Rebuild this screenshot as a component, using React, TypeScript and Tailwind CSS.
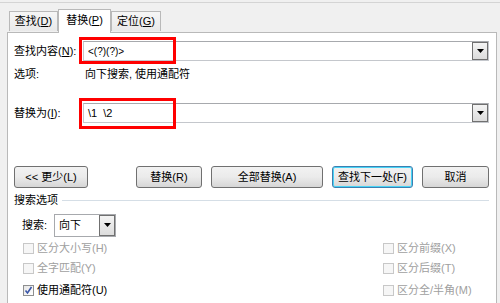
import React from "react";

const FONT = { fontFamily: '"Liberation Sans", "Noto Sans CJK SC", sans-serif' };

function DropBtn({ h }: { h: string }) {
  return (
    <div className={`w-[16px] ${h} border border-[#707070] bg-gradient-to-b from-[#f4f4f4] to-[#dcdcdc] flex items-center justify-center`}>
      <svg width="7" height="4" viewBox="0 0 7 4">
        <path d="M0 0h7L3.5 4z" fill="#000" />
      </svg>
    </div>
  );
}

function Btn({ w, label, primary }: { w: string; label: string; primary?: boolean }) {
  return (
    <div
      className={`${w} h-[22px] rounded-[3px] border ${primary ? "border-[#3c7fb1] shadow-[inset_0_0_0_1px_#48d4f6]" : "border-[#707070]"} bg-gradient-to-b from-[#f2f2f2] via-[#ebebeb] to-[#d6d6d6] flex items-center justify-center text-[11px] text-black whitespace-nowrap`}
    >
      {label}
    </div>
  );
}

function Check({ label, checked, disabled }: { label: string; checked?: boolean; disabled?: boolean }) {
  return (
    <div className="flex items-center h-[14px] whitespace-nowrap">
      <div
        className={`w-[11px] h-[11px] shrink-0 border ${disabled ? "border-[#c8c8c8] bg-[#f6f6f6]" : "border-[#8e8f8f] bg-gradient-to-br from-[#e6e6e6] to-[#ffffff]"} flex items-center justify-center`}
      >
        {checked && (
          <svg width="9" height="9" viewBox="0 0 9 9">
            <path d="M1.5 4.5 L3.5 7 L7.5 1" stroke="#3a56a8" strokeWidth="1.6" fill="none" />
          </svg>
        )}
      </div>
      <span className={`ml-[3px] text-[11px] leading-none ${disabled ? "text-[#a0a0a0]" : "text-black"}`}>{label}</span>
    </div>
  );
}

export default function App() {
  return (
    <div className="w-[500px] h-[303px] bg-[#f0f0f0] overflow-hidden relative" style={FONT}>
      <div className="h-[2px]" />
      <div className="h-px bg-[#d4d4d4]" />
      <div className="pl-[7px] pr-[3px]">
        {/* tabs */}
        <div className="flex items-end h-[29px] pl-[2px] relative z-10">
          <div className="w-[49px] h-[20px] border border-[#b9b9b9] border-b-0 bg-gradient-to-b from-[#f6f6f6] to-[#e9e9e9] flex items-center justify-center text-[11px] text-black mb-px whitespace-nowrap">
            查找(<span className="underline">D</span>)
          </div>
          <div className="w-[53px] h-[24px] border border-[#b9b9b9] border-b-0 bg-white flex items-center justify-center text-[11px] text-black -mb-px pb-[2px] whitespace-nowrap">
            替换(<span className="underline">P</span>)
          </div>
          <div className="w-[50px] h-[20px] border border-[#b9b9b9] border-b-0 bg-gradient-to-b from-[#f6f6f6] to-[#e9e9e9] flex items-center justify-center text-[11px] text-black mb-px whitespace-nowrap">
            定位(<span className="underline">G</span>)
          </div>
        </div>
        {/* panel */}
        <div className="border border-[#b9b9b9] bg-white h-[300px] pl-[6px] pr-[7px] relative">
          {/* find row */}
          <div className="flex items-center mt-[8px] h-[20px]">
            <div className="w-[69px] shrink-0 text-[11px] text-black whitespace-nowrap">
              查找内容(<span className="underline">N</span>):
            </div>
            <div className="flex-1 h-[20px] border border-[#c4c7cc] border-t-[#a7a9ad] flex items-center">
              <span className="pl-[4px] text-[10px] text-black">
                &lt;(?)(?)&gt;
              </span>
              <div className="flex-1" />
              <DropBtn h="h-[18px]" />
            </div>
          </div>
          {/* options row */}
          <div className="flex items-center mt-[6px] h-[14px] text-[11px] text-black whitespace-nowrap">
            <div className="w-[71px] shrink-0">选项:</div>
            <div>向下搜索, 使用通配符</div>
          </div>
          {/* replace row */}
          <div className="flex items-center mt-[22px] h-[20px]">
            <div className="w-[69px] shrink-0 text-[11px] text-black whitespace-nowrap">
              替换为(<span className="underline">I</span>):
            </div>
            <div className="flex-1 h-[20px] border border-[#c4c7cc] border-t-[#a7a9ad] flex items-center">
              <span className="pl-[4px] text-[11px] text-black whitespace-pre">
                {"\\1  \\2"}
              </span>
              <div className="flex-1" />
              <DropBtn h="h-[18px]" />
            </div>
          </div>
          {/* buttons */}
          <div className="flex items-center mt-[43px]">
            <Btn w="w-[75px]" label="<< 更少(L)" />
            <div className="ml-[48px]">
              <Btn w="w-[66px]" label="替换(R)" />
            </div>
            <div className="ml-[9px]">
              <Btn w="w-[112px]" label="全部替换(A)" />
            </div>
            <div className="ml-[9px]">
              <Btn w="w-[81px]" label="查找下一处(F)" primary />
            </div>
            <div className="ml-[9px]">
              <Btn w="w-[67px]" label="取消" />
            </div>
          </div>
          {/* search options header */}
          <div className="flex items-center mt-[5px] h-[14px]">
            <span className="text-[11px] text-black whitespace-nowrap">搜索选项</span>
            <div className="flex-1 h-px bg-[#d5dee6] ml-[4px]" />
          </div>
          {/* search select */}
          <div className="flex items-center mt-[6px] ml-[8px] h-[24px]">
            <span className="text-[11px] text-black w-[32px] shrink-0 whitespace-nowrap">搜索:</span>
            <div className="w-[62px] h-[23px] border border-[#a7a9ad] bg-white flex items-center">
              <span className="pl-[4px] text-[11px] text-black flex-1 whitespace-nowrap">向下</span>
              <DropBtn h="h-[21px]" />
            </div>
          </div>
          {/* checkboxes */}
          <div className="ml-[9px]">
            <div className="flex items-center justify-between mt-[4px]">
              <Check label="区分大小写(H)" disabled />
              <div className="w-[106px]">
                <Check label="区分前缀(X)" disabled />
              </div>
            </div>
            <div className="flex items-center justify-between mt-[6px]">
              <Check label="全字匹配(Y)" disabled />
              <div className="w-[106px]">
                <Check label="区分后缀(T)" disabled />
              </div>
            </div>
            <div className="flex items-center justify-between mt-[8px]">
              <Check label="使用通配符(U)" checked />
              <div className="w-[106px]">
                <Check label="区分全/半角(M)" disabled />
              </div>
            </div>
          </div>
          {/* red highlight boxes */}
          <div className="absolute left-[71px] top-[4px] w-[97px] h-[27px] border-[3px] border-[#ff0000]" />
          <div className="absolute left-[71px] top-[65px] w-[97px] h-[31px] border-[3px] border-[#ff0000]" />
        </div>
      </div>
    </div>
  );
}
